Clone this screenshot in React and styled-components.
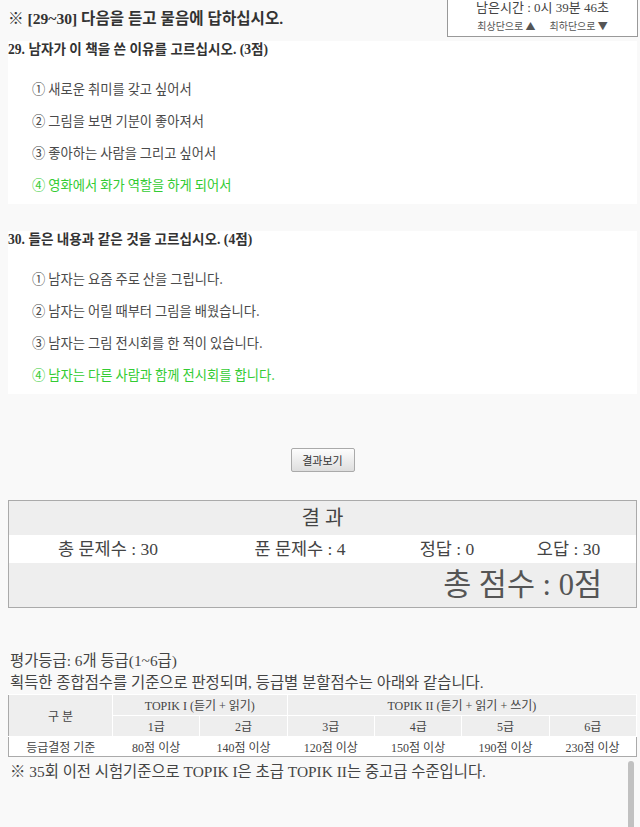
import React from 'react';
import styled, { createGlobalStyle } from 'styled-components';

const GlobalStyle = createGlobalStyle`
  body {
    margin: 0;
    background: #f9f9f9;
    font-family: "Liberation Serif", "Noto Sans CJK KR", serif;
    color: #333;
  }
`;

const questions = [
  {
    title: '29. 남자가 이 책을 쓴 이유를 고르십시오. (3점)',
    options: ['① 새로운 취미를 갖고 싶어서', '② 그림을 보면 기분이 좋아져서', '③ 좋아하는 사람을 그리고 싶어서', '④ 영화에서 화가 역할을 하게 되어서'],
    answer: 3,
  },
  {
    title: '30. 들은 내용과 같은 것을 고르십시오. (4점)',
    options: ['① 남자는 요즘 주로 산을 그립니다.', '② 남자는 어릴 때부터 그림을 배웠습니다.', '③ 남자는 그림 전시회를 한 적이 있습니다.', '④ 남자는 다른 사람과 함께 전시회를 합니다.'],
    answer: 3,
  },
];

const grades = [
  ['1급', '80점 이상'],
  ['2급', '140점 이상'],
  ['3급', '120점 이상'],
  ['4급', '150점 이상'],
  ['5급', '190점 이상'],
  ['6급', '230점 이상'],
];

export default function App() {
  return (
    <Page>
      <GlobalStyle />
      <Timer>
        <TimerLine>남은시간 : 0시 39분 46초</TimerLine>
        <TimerLinks>
          <span>최상단으로 ▲</span>
          <span>최하단으로 ▼</span>
        </TimerLinks>
      </Timer>

      <Heading>※ [29~30] 다음을 듣고 물음에 답하십시오.</Heading>

      {questions.map((q, i) => (
        <Panel key={i} first={i === 0}>
          <QTitle>{q.title}</QTitle>
          <Options>
            {q.options.map((o, j) => (
              <Option key={j} correct={j === q.answer}>{o}</Option>
            ))}
          </Options>
        </Panel>
      ))}

      <ButtonRow>
        <ResultButton>결과보기</ResultButton>
      </ButtonRow>

      <ResultBox>
        <ResultHead>결 과</ResultHead>
        <Stats>
          <Stat>총 문제수 : 30</Stat>
          <Stat>푼 문제수 : 4</Stat>
          <Stat>정답 : 0</Stat>
          <Stat>오답 : 30</Stat>
        </Stats>
        <Total>총 점수 : 0점</Total>
      </ResultBox>

      <Info>
        <InfoLine>평가등급: 6개 등급(1~6급)</InfoLine>
        <InfoLine>획득한 종합점수를 기준으로 판정되며, 등급별 분할점수는 아래와 같습니다.</InfoLine>
      </Info>

      <GradeTable>
        <colgroup>
          <col style={{ width: 104 }} />
          {grades.map((g) => <col key={g[0]} />)}
        </colgroup>
        <tbody>
          <tr>
            <Th rowSpan={2}>구 분</Th>
            <Th colSpan={2}>TOPIK I (듣기 + 읽기)</Th>
            <Th colSpan={4}>TOPIK II (듣기 + 읽기 + 쓰기)</Th>
          </tr>
          <tr>
            {grades.map((g) => <Th key={g[0]}>{g[0]}</Th>)}
          </tr>
          <tr>
            <Td>등급결정 기준</Td>
            {grades.map((g) => <Td key={g[0]}>{g[1]}</Td>)}
          </tr>
        </tbody>
      </GradeTable>

      <Footer>
        <FootNote>※ 35회 이전 시험기준으로 TOPIK I은 초급 TOPIK II는 중고급 수준입니다.</FootNote>
        <Thumb />
      </Footer>
    </Page>
  );
}

const Page = styled.div`
  padding: 0 3px 0 8px;
`;

const Timer = styled.div`
  position: fixed;
  top: -1px;
  right: 2px;
  width: 189px;
  height: 36px;
  background: #fff;
  border: 1px solid #999;
  text-align: center;
`;

const TimerLine = styled.div`
  margin-top: 1px;
  font-size: 13px;
  line-height: 14px;
  color: #444;
`;

const TimerLinks = styled.div`
  margin-top: 5px;
  display: flex;
  justify-content: center;
  gap: 14px;
  font-family: "Noto Sans CJK KR", sans-serif;
  font-size: 10px;
  line-height: 12px;
  color: #555;
`;

const Heading = styled.div`
  height: 38px;
  line-height: 38px;
  font-size: 15.6px;
  font-weight: bold;
  color: #333;
  margin-bottom: 3px;
`;

const Panel = styled.div`
  background: #fff;
  margin-top: ${(p) => (p.first ? '0' : '27px')};
  padding-bottom: 3px;
`;

const QTitle = styled.div`
  font-size: 13.6px;
  line-height: 18px;
  font-weight: bold;
  color: #333;
`;

const Options = styled.div`
  margin-top: 14px;
  padding-left: 24px;
`;

const Option = styled.div`
  font-family: "Noto Sans CJK KR", sans-serif;
  font-size: 13.3px;
  line-height: 32px;
  color: ${(p) => (p.correct ? '#33cc33' : '#4a4a4a')};
`;

const ButtonRow = styled.div`
  display: flex;
  justify-content: center;
  margin-top: 54px;
`;

const ResultButton = styled.button`
  width: 64px;
  height: 24px;
  padding: 0;
  font-family: "Noto Sans CJK KR", sans-serif;
  font-size: 11px;
  color: #333;
  background: linear-gradient(#fdfdfd, #dedede);
  border: 1px solid #aaa;
  border-radius: 2px;
`;

const ResultBox = styled.div`
  margin-top: 28px;
  border: 1px solid #aaa;
  color: #444;
`;

const ResultHead = styled.div`
  background: #eee;
  height: 34px;
  line-height: 34px;
  text-align: center;
  font-size: 20px;
`;

const Stats = styled.div`
  display: grid;
  grid-template-columns: 198px 186px 108px 1fr;
  background: #fff;
  height: 28px;
  line-height: 28px;
  font-size: 17.5px;
`;

const Stat = styled.div`
  text-align: center;
`;

const Total = styled.div`
  background: #eee;
  height: 44px;
  line-height: 44px;
  text-align: right;
  padding-right: 34px;
  font-size: 30.5px;
  color: #555;
`;

const Info = styled.div`
  margin-top: 42px;
  padding-left: 2px;
`;

const InfoLine = styled.div`
  font-size: 15.4px;
  line-height: 22px;
  color: #444;
`;

const GradeTable = styled.table`
  width: 100%;
  border-collapse: collapse;
  border: 1px solid #aaa;
  font-size: 12px;
  color: #444;
  table-layout: fixed;
`;

const Th = styled.td`
  background: #eee;
  border: 1px solid #fff;
  border-left: 1px solid #ccc;
  height: 20px;
  padding: 0;
  text-align: center;
  font-weight: normal;
  &:first-child {
    border-left: none;
  }
`;

const Td = styled.td`
  background: #fff;
  height: 19px;
  padding: 0;
  text-align: center;
`;

const Footer = styled.div`
  display: flex;
  justify-content: space-between;
  align-items: flex-start;
`;

const FootNote = styled.div`
  padding-left: 2px;
  margin-top: 4px;
  font-size: 15.4px;
  line-height: 22px;
  color: #444;
`;

const Thumb = styled.div`
  width: 6px;
  height: 70px;
  margin-top: 4px;
  margin-right: 3px;
  background: #c1c1c1;
  border-radius: 3px;
`;
